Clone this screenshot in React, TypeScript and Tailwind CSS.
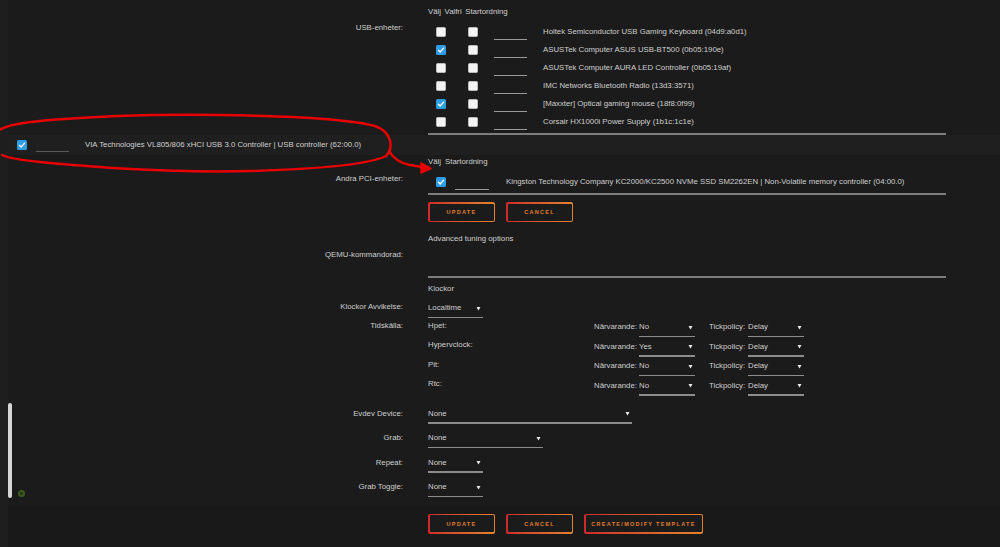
import React from "react";

const Box = ({ checked }: { checked?: boolean }) =>
  checked ? (
    <div className="w-[10px] h-[10px] rounded-[1.5px] bg-[#2f9de3] flex items-center justify-center">
      <svg width="8" height="8" viewBox="0 0 8 8">
        <path d="M1.4 4.3 L3.2 6 L6.6 2.1" stroke="white" strokeWidth="1.3" fill="none" strokeLinecap="round" strokeLinejoin="round" />
      </svg>
    </div>
  ) : (
    <div className="w-[10px] h-[10px] rounded-[1.5px] bg-[#f3f3f3] border border-[#bdbdbd]" />
  );

const Arrow = () => (
  <svg width="5" height="5" viewBox="0 0 5 5" className="shrink-0">
    <path d="M0.5 1 L4.5 1 L2.5 4.5 Z" fill="#e8e8e8" />
  </svg>
);

const Select = ({ value, w, pt = "pt-0" }: { value: string; w: string; pt?: string }) => (
  <div className={`${w} ${pt} flex flex-col`}>
    <div className="h-[12px] flex items-center justify-between pr-[2px]">
      <span>{value}</span>
      <Arrow />
    </div>
    <div className="mt-[2.5px] h-[1.5px] bg-[#8c8c8c]" />
  </div>
);

const Btn = ({ label, w }: { label: string; w: string }) => (
  <div className={`${w} h-[20px] p-[1.5px] rounded-[2px] bg-gradient-to-r from-[#cc2a2a] to-[#e2842e]`}>
    <div className="w-full h-full rounded-[1px] bg-[#1b1b1b] flex items-center justify-center text-[5.5px] font-bold tracking-[1.3px] text-[#e07e30]">
      {label}
    </div>
  </div>
);

const usb = [
  { c: false, t: "Holtek Semiconductor USB Gaming Keyboard (04d9:a0d1)" },
  { c: true, t: "ASUSTek Computer ASUS USB-BT500 (0b05:190e)" },
  { c: false, t: "ASUSTek Computer AURA LED Controller (0b05:19af)" },
  { c: false, t: "IMC Networks Bluetooth Radio (13d3:3571)" },
  { c: true, t: "[Maxxter] Optical gaming mouse (18f8:0f99)" },
  { c: false, t: "Corsair HX1000i Power Supply (1b1c:1c1e)" },
];

const clocks = [
  { n: "Hpet:", p: "No" },
  { n: "Hypervclock:", p: "Yes" },
  { n: "Pit:", p: "No" },
  { n: "Rtc:", p: "No" },
];

export default function App() {
  return (
    <div className="relative w-[1000px] h-[547px] overflow-hidden bg-[#1e1e1e] text-[#cfcfcf] text-[7.8px] leading-[12px] font-['Liberation_Sans',Arial,sans-serif]">
      <div className="ml-[8px] h-full flex flex-col bg-[#1b1b1b]">
        {/* USB */}
        <div className="grid grid-cols-[395px_518px] gap-x-[25px]">
          <div className="text-right pt-[22px] h-[34px]">USB-enheter:</div>
          <div className="pt-[6px]">
            <div className="flex gap-[3.5px] h-[12px]">
              <span>Välj</span>
              <span>Valfri</span>
              <span>Startordning</span>
            </div>
            <div className="mt-[5px]">
              {usb.map((r, i) => (
                <div key={i} className="h-[18px] flex items-center">
                  <div className="ml-[8px]"><Box checked={r.c} /></div>
                  <div className="ml-[22px]"><Box /></div>
                  <div className="ml-[16px] w-[33px] h-[1px] bg-[#9a9a9a] self-end mb-[1px]" />
                  <span className="ml-[16px]">{r.t}</span>
                </div>
              ))}
            </div>
            <div className="mt-[2px] h-[2px] bg-[#7d7d7d]" />
          </div>
        </div>

        {/* VIA row */}
        <div className="h-[20px] flex items-center bg-[#1f1f1f]">
          <div className="ml-[9px]"><Box checked /></div>
          <div className="ml-[9px] w-[33px] h-[1px] bg-[#5a5a5a] self-end mb-[3px]" />
          <span className="ml-[16px]">VIA Technologies VL805/806 xHCI USB 3.0 Controller | USB controller (62:00.0)</span>
        </div>

        {/* PCI */}
        <div className="grid grid-cols-[395px_518px] gap-x-[25px]">
          <div className="text-right pt-[18px]">Andra PCI-enheter:</div>
          <div className="pt-[1px]">
            <div className="flex gap-[4px] h-[12px]">
              <span>Välj</span>
              <span>Startordning</span>
            </div>
            <div className="mt-[5px] h-[18px] flex items-center">
              <div className="ml-[8px]"><Box checked /></div>
              <div className="ml-[9px] w-[34px] h-[1px] bg-[#9a9a9a] self-end mb-[1px]" />
              <span className="ml-[17px]">Kingston Technology Company KC2000/KC2500 NVMe SSD SM2262EN | Non-Volatile memory controller (04:00.0)</span>
            </div>
            <div className="mt-[2px] h-[2px] bg-[#7d7d7d]" />
            <div className="mt-[7px] flex gap-[11px]">
              <Btn label="UPDATE" w="w-[67px]" />
              <Btn label="CANCEL" w="w-[67px]" />
            </div>
            <div className="mt-[11px] h-[12px]">Advanced tuning options</div>
          </div>
        </div>

        {/* QEMU */}
        <div className="grid grid-cols-[395px_518px] gap-x-[25px]">
          <div className="text-right pt-[4px]">QEMU-kommandorad:</div>
          <div className="h-[33px] border-b-2 border-[#7d7d7d]" />
        </div>

        {/* Klockor */}
        <div className="grid grid-cols-[395px_518px] gap-x-[25px]">
          <div />
          <div className="mt-[5px] h-[12px]">Klockor</div>
        </div>
        <div className="grid grid-cols-[395px_518px] gap-x-[25px] mt-[5px]">
          <div className="text-right pt-[1px]">Klockor Avvikelse:</div>
          <Select value="Localtime" w="w-[55px]" pt="pt-[2px]" />
        </div>
        <div className="grid grid-cols-[395px_518px] gap-x-[25px] mt-[1.5px]">
          <div className="text-right">Tidskälla:</div>
          <div>
            {clocks.map((c) => (
              <div key={c.n} className="h-[19.5px] flex items-start">
                <span className="w-[166px]">{c.n}</span>
                <span className="w-[45px] pt-[1.5px]">Närvarande:</span>
                <Select value={c.p} w="w-[56px]" pt="pt-[1.5px]" />
                <span className="ml-[14px] w-[39px] pt-[1.5px]">Tickpolicy:</span>
                <Select value="Delay" w="w-[56px]" pt="pt-[1.5px]" />
              </div>
            ))}
          </div>
        </div>

        {/* Evdev */}
        <div className="grid grid-cols-[395px_518px] gap-x-[25px] mt-[10px]">
          {[
            { l: "Evdev Device:", w: "w-[204px]" },
            { l: "Grab:", w: "w-[115px]" },
            { l: "Repeat:", w: "w-[55px]" },
            { l: "Grab Toggle:", w: "w-[55px]" },
          ].map((r) => (
            <React.Fragment key={r.l}>
              <div className="text-right h-[24.5px]">{r.l}</div>
              <Select value="None" w={r.w} />
            </React.Fragment>
          ))}
        </div>

        {/* Bottom buttons */}
        <div className="flex-1 bg-[#191919] pt-[8px]">
          <div className="ml-[420px] flex gap-[11px]">
            <Btn label="UPDATE" w="w-[67px]" />
            <Btn label="CANCEL" w="w-[67px]" />
            <Btn label="CREATE/MODIFY TEMPLATE" w="w-[119px]" />
          </div>
        </div>
      </div>

      {/* scrollbar + indicator */}
      <div className="absolute left-[8px] top-[403px] w-[4px] h-[95px] rounded-full bg-[#d6d6d6]" />
      <div className="absolute left-[18px] top-[490px] w-[7px] h-[7px] rounded-full border-[2px] border-[#3c5a1c] bg-[#25321a]" />

      {/* red annotation */}
      <svg className="absolute inset-0 pointer-events-none" width="1000" height="547" viewBox="0 0 1000 547">
        <path
          d="M -6 135 C -2 127, 15 123, 50 120 C 100 116, 160 114, 220 115 C 290 116, 350 119, 375 126 C 392 132, 394 148, 386 156 C 370 164, 320 169, 250 171 C 170 173, 90 167, 40 162 C 20 160, 8 158, 2 155"
          stroke="#e80000"
          strokeWidth="2.5"
          fill="none"
          strokeLinecap="round"
        />
        <path d="M 389 151 C 393 158, 399 163, 410 165 L 428 168" stroke="#e80000" strokeWidth="2.5" fill="none" strokeLinecap="round" />
        <path d="M 421 163 L 431 168.5 L 421 173 Z" fill="#e80000" stroke="#e80000" strokeWidth="1.5" strokeLinejoin="round" />
      </svg>
    </div>
  );
}
